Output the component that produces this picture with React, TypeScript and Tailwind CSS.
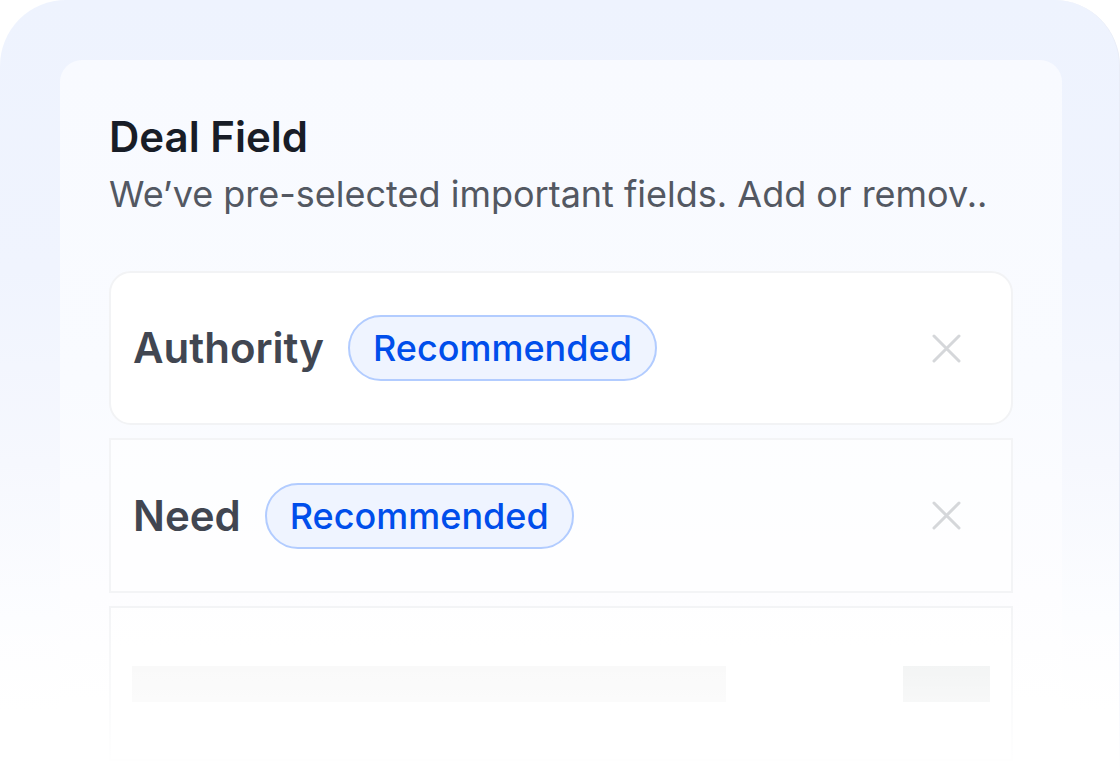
import React from "react";

function XIcon() {
  return (
    <svg width="29" height="29" viewBox="0 0 29 29" fill="none" className="ml-auto shrink-0">
      <path d="M2 2L27 27M27 2L2 27" stroke="#d5d7da" strokeWidth="3" strokeLinecap="round" />
    </svg>
  );
}

function Badge() {
  return (
    <span className="ml-[24px] h-[66px] flex items-center rounded-full border-2 border-[#b2ccff] bg-[#eff4ff] px-[23px] text-[36px] leading-none font-medium text-[#004eeb]">
      Recommended
    </span>
  );
}

export default function App() {
  return (
    <div className="relative w-[1120px] h-[772px] overflow-hidden bg-white font-['Inter',sans-serif]">
      <div className="h-full rounded-t-[66px] border-r border-[#e9edf7] bg-[linear-gradient(180deg,#eef3fe_0%,#f0f4fe_35%,#f6f8fe_60%,#fcfdff_80%,#ffffff_92%)] pt-[60px] pl-[60px]">
        <div className="w-[1002px] h-full rounded-t-[22px] bg-[linear-gradient(180deg,#f8faff_0%,#f9fbff_45%,#fdfdff_75%,#ffffff_90%)] px-[49px] pt-[53px]">
          <h1 className="text-[42px] leading-[48px] font-semibold text-[#181d27]">Deal Field</h1>
          <p className="mt-[13px] text-[36px] leading-[41px] text-[#535862]">
            We’ve pre-selected important fields. Add or remov..
          </p>
          <div className="mt-[56px] flex flex-col gap-[13px]">
            <div className="h-[154px] rounded-[22px] border-2 border-[#f2f3f5] bg-white flex items-center pl-[22px] pr-[50px]">
              <span className="text-[42px] leading-none font-semibold text-[#414651]">Authority</span>
              <Badge />
              <XIcon />
            </div>
            <div className="h-[155px] border-2 border-[#f3f4f6] bg-white/50 flex items-center pl-[22px] pr-[50px]">
              <span className="text-[42px] leading-none font-semibold text-[#414651]">Need</span>
              <Badge />
              <XIcon />
            </div>
            <div className="h-[155px] border-2 border-[#f2f3f5] bg-white/50 flex items-center pl-[21px] pr-[21px]">
              <div className="h-[36px] w-[594px] bg-[#f5f5f5]" />
              <div className="ml-auto h-[36px] w-[87px] bg-[#ebeded]" />
            </div>
          </div>
        </div>
      </div>
      <div className="pointer-events-none absolute inset-x-0 bottom-0 h-[182px] bg-gradient-to-b from-white/0 to-white" />
    </div>
  );
}
